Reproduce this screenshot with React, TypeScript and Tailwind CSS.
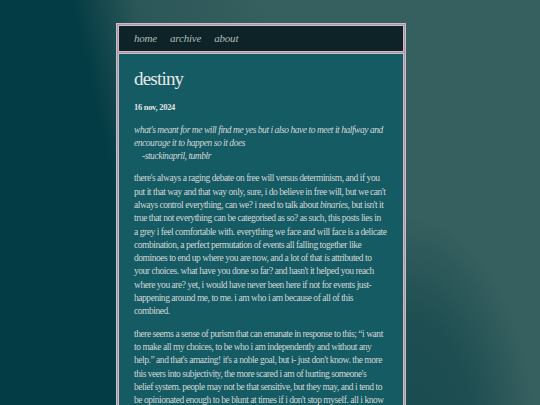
export default function App() {
  return (
    <div className="min-h-[405px] w-full overflow-hidden bg-[radial-gradient(ellipse_130px_235px_at_405px_450px,rgba(24,74,78,0.95)_0%,rgba(24,74,78,0.8)_55%,rgba(24,74,78,0)_100%),linear-gradient(77deg,#033c44_27%,#2c5758_37%,#365f5f_58%)] pt-[23px] font-['Liberation_Serif',serif]">
      <div className="ml-[116px] w-[290px] border border-[#d4b7c9] bg-[#9c9aa3] p-px flex flex-col gap-px">
        <nav className="flex gap-[13px] border border-[#d4b7c9] bg-[#0e2327] px-[15px] h-[27px] items-center text-[11px] tracking-[-0.2px] italic text-[#a9bcbd]">
          <a>home</a>
          <a>archive</a>
          <a>about</a>
        </nav>
        <main className="border border-[#d4b7c9] bg-[#155b64] px-[15px] pt-[13px] pb-4 text-[#d3d6d6] text-[9.5px] leading-[13.3px] tracking-[-0.46px]">
          <h1 className="text-[19px] leading-[24px] tracking-[-0.8px] text-[#e6e8e8]">destiny</h1>
          <p className="mt-[10px] text-[8.5px] font-bold leading-[13px] tracking-[-0.3px] text-[#e0e3e3]">16 nov, 2024</p>
          <blockquote className="mt-[9.5px] italic">
            what's meant for me will find me yes but i also have to meet it halfway and<br />
            encourage it to happen so it does
            <span className="block pl-[8px]">-stuckinapril, tumblr</span>
          </blockquote>
          <p className="mt-[9px]">
            there's always a raging debate on free will versus determinism, and if you<br />
            put it that way and that way only, sure, i do believe in free will, but we can't<br />
            always control everything, can we? i need to talk about <i>binaries</i>, but isn't it<br />
            true that not everything can be categorised as so? as such, this posts lies in<br />
            a grey i feel comfortable with. everything we face and will face is a delicate<br />
            combination, a perfect permutation of events all falling together like<br />
            dominoes to end up where you are now, and a lot of that <i>is</i> attributed to<br />
            your choices. what have you done so far? and hasn't it helped you reach<br />
            where you are? yet, i would have never been here if not for events just-<br />
            happening around me, to me. i am who i am because of all of this<br />
            combined.
          </p>
          <p className="mt-[9px]">
            there seems a sense of purism that can emanate in response to this; “i want<br />
            to make all my choices, to be who i am independently and without any<br />
            help.” and that's amazing! it's a noble goal, but i- just don't know. the more<br />
            this veers into subjectivity, the more scared i am of hurting someone's<br />
            belief system. people may not be that sensitive, but they may, and i tend to<br />
            be opinionated enough to be blunt at times if i don't stop myself. all i know<br />
            is that this is how i see it, and you are free to see it however you like.
          </p>
        </main>
      </div>
    </div>
  );
}
